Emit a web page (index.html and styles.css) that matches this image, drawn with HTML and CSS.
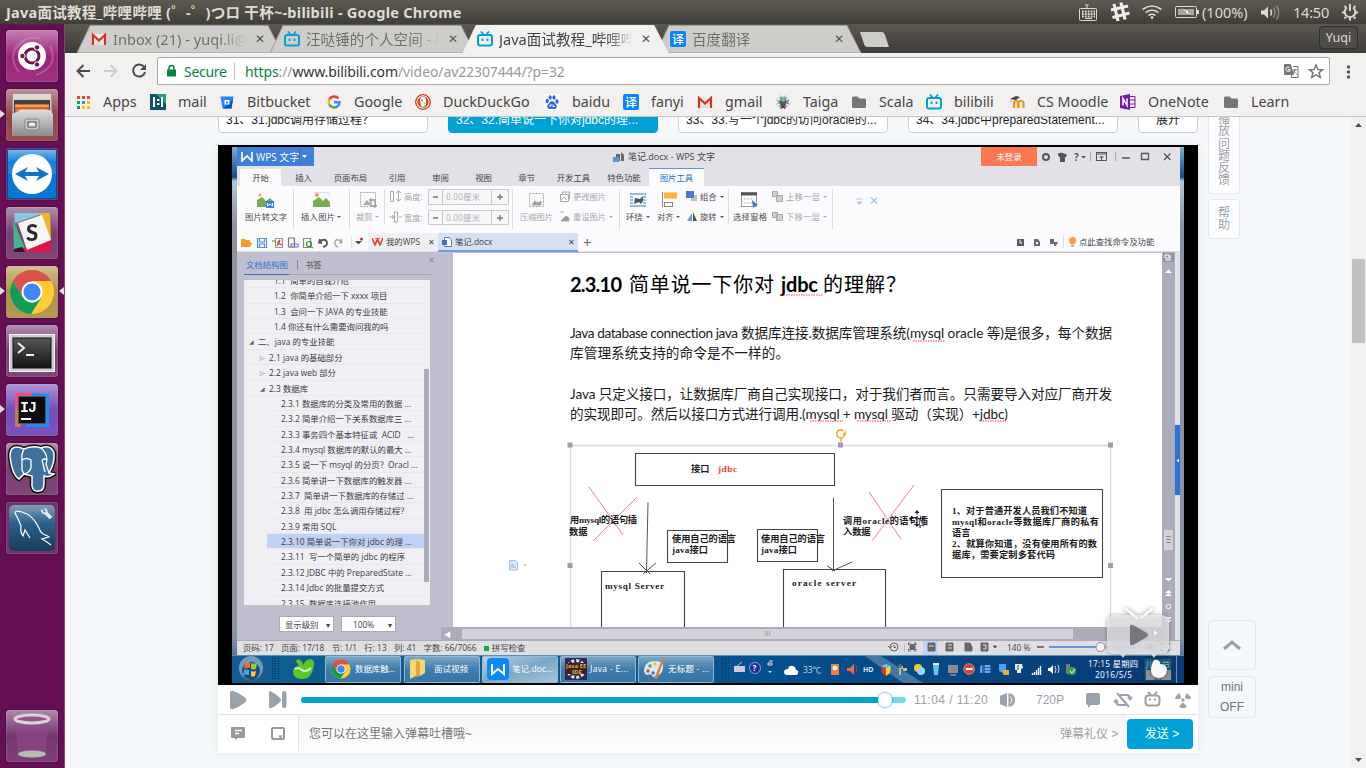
FILE: index.html
```html
<!DOCTYPE html>
<html>
<head>
<meta charset="utf-8">
<title>Java面试教程_哔哩哔哩 (゜-゜)つロ 干杯~-bilibili</title>
<link rel="stylesheet" href="styles.css">
</head>
<body>
<svg width="0" height="0" class="defs">
  <defs>
    <symbol id="tv" viewBox="0 0 16 16"><path d="M4.5 1l2 2.500M11.500 1l-2 2.500" stroke="#00a1d6" stroke-width="1.800" stroke-linecap="round"/><rect x="1" y="4" width="14" height="10.500" rx="2" fill="none" stroke="#00a1d6" stroke-width="2"/><path d="M5.500 7.500v2.500M10.500 7.500v2.500" stroke="#00a1d6" stroke-width="1.800"/></symbol>
    <symbol id="gm" viewBox="0 0 16 16"><path d="M1 3h14v11H1z" fill="#eee"/><path d="M4 14L8 9l4 5z" fill="#dcdcdc"/><path d="M2 14V4l6 5.500L14 4v10" fill="none" stroke="#d93025" stroke-width="2.200"/></symbol>
    <symbol id="fy" viewBox="0 0 16 16"><rect width="16" height="16" rx="2" fill="#0a84ff"/><text x="8" y="12.500" font-size="12" font-weight="500" fill="#fff" text-anchor="middle" font-family="Noto Sans CJK SC">译</text></symbol>
    <symbol id="fold" viewBox="0 0 16 16"><path d="M1 4q0-1.500 1.500-1.500h4l2 2h5q1.500 0 1.500 1.500v6.500q0 1.500-1.500 1.500h-11Q1 14 1 12.500z" fill="#757575"/></symbol>
    <symbol id="chrome" viewBox="0 0 46 46"><circle cx="23" cy="23" r="22" fill="#fc3"/><path d="M23 23L4 12A22 22 0 0 1 42 12H23z" fill="#d9534a"/><path d="M23 12H42A22 22 0 0 0 4 12L13.500 28z" fill="#d9534a"/><path d="M4 12A22 22 0 0 0 22 45L32.500 28.500 23 34 13.500 28z" fill="#119d58"/><circle cx="23" cy="23" r="10.500" fill="#fff"/><circle cx="23" cy="23" r="8.500" fill="#4285f4"/></symbol>
    <linearGradient id="gl" x2="0" y2="1"><stop offset="0" stop-color="#fff" stop-opacity=".45"/><stop offset=".5" stop-color="#fff" stop-opacity=".05"/><stop offset="1" stop-color="#fff" stop-opacity=".1"/></linearGradient>
    <linearGradient id="metal" x2="0" y2="1"><stop offset="0" stop-color="#ddd"/><stop offset="1" stop-color="#8c8c8c"/></linearGradient>
    <linearGradient id="dark" x2="0" y2="1"><stop offset="0" stop-color="#555"/><stop offset="1" stop-color="#151515"/></linearGradient>
    <linearGradient id="sea" x2="0" y2="1"><stop offset="0" stop-color="#7fa0b8"/><stop offset=".4" stop-color="#2c608a"/><stop offset="1" stop-color="#163c59"/></linearGradient>
    <linearGradient id="btn" x2="0" y2="1"><stop offset="0" stop-color="#7da8c8"/><stop offset=".5" stop-color="#3f7caa"/><stop offset="1" stop-color="#3577a6"/></linearGradient>
    <linearGradient id="btnon" x2="1" y2="1"><stop offset="0" stop-color="#bcd3e3"/><stop offset=".5" stop-color="#7aa6c6"/><stop offset="1" stop-color="#a9c6da"/></linearGradient>
    <linearGradient id="task" x2="1" y2="0"><stop offset="0" stop-color="#0e5c92"/><stop offset=".45" stop-color="#0f5a90"/><stop offset=".56" stop-color="#04508f"/><stop offset="1" stop-color="#0a3a73"/></linearGradient>
  </defs>
</svg>

<header class="menubar">
  <span class="menu-title">Java面试教程_哔哩哔哩 (゜-゜)つロ 干杯~-bilibili - Google Chrome</span>
  <div class="indicators">
    <svg width="200" height="24" viewBox="1076 0 200 24" fill="none" stroke="#dfdbd2"><path d="M1087 8V5h-2M1088 5.500V4"/><rect x="1079.500" y="8.500" width="17" height="12" rx="1"/><path d="M1082 11.500h13M1082 14h13M1082 16.500h13" stroke-dasharray="1.700 1.200" stroke-width="1.800"/><path d="M1085 18.500h7"/><g stroke-width="3.200" stroke="#eee"><path d="M1114 4l4 17M1121 2.500l4 17M1111 10l17-4M1112.500 17.500l17-4.500"/></g><g stroke-width="1.700"><path d="M1142.500 9.500q9.500-7 19 0M1145.500 12.500q6.500-4.500 13 0M1148.500 15.500q3.500-2.500 7 0"/></g><circle cx="1152" cy="17.500" r="1" fill="#dfdbd2"/><rect x="1175.500" y="6.500" width="21" height="11" rx="1"/><rect x="1178" y="9" width="16" height="6" fill="#aaa69e" stroke="none"/><path d="M1198 10v4" stroke-width="2"/><path d="M1180 8l9 3 -1 1 6 4 -9-3 1-1z" fill="#fff" stroke="#555" stroke-width=".4"/></svg>
    <span class="ind-pct">(100%)</span>
    <svg width="24" height="24" viewBox="1258 0 24 24" fill="none" stroke="#dfdbd2" stroke-width="1.500"><path d="M1261 10.500h3l4-4v12l-4-4h-3z" fill="#dfdbd2" stroke="none"/><path d="M1270.500 9.500q2 3 0 6"/><path d="M1273.500 7.500q3 5 0 10M1276.500 5.500q4.500 7 0 14" stroke="#8d8a82"/></svg>
    <span class="ind-time">14:50</span>
    <svg width="22" height="24" viewBox="1339 0 22 24" fill="none" stroke="#dfdbd2"><path d="M1347 7.500a5.300 5.300 0 1 0 6 0M1350 4v7" stroke-width="1.900"/><path d="M1344.500 6l1.500 1.500M1355.500 6l-1.500 1.500M1342 12.500h2.500M1358 12.500h-2.500M1344.500 18.500l1.500-1.500M1355.500 18.500l-1.500-1.500M1350 18v2.500" stroke-width="2"/></svg>
  </div>
</header>

<div class="desktop">
<nav class="launcher">
  <svg class="app" viewBox="0 0 52 52"><rect class="tile" width="52" height="52" rx="4" fill="#951a72"/><rect width="52" height="52" rx="4" fill="url(#gl)"/><path d="M7 28Q8 6 34 8M13 42Q-2 22 20 10M44 16Q54 36 30 45" fill="none" stroke="#d9a0c7" stroke-opacity=".35" stroke-width="2"/><circle cx="26" cy="26" r="14" fill="#fff"/><circle cx="26" cy="26" r="7" fill="none" stroke="#6d1450" stroke-width="3"/><g fill="#6d1450" stroke="#fff"><circle cx="16.500" cy="26" r="2.700"/><circle cx="31" cy="17.500" r="2.700"/><circle cx="31" cy="34.500" r="2.700"/></g></svg>
  <div class="slot running"><svg class="app" viewBox="0 0 52 52"><rect class="tile" width="52" height="52" rx="4" fill="#8d393f"/><rect width="52" height="52" rx="4" fill="url(#gl)"/><path d="M7 5h38l2 42H6z" fill="url(#metal)"/><rect x="8" y="11" width="36" height="14" fill="#45403c"/><path d="M9 15h34v10H9z" fill="#c76a34"/><path d="M9 16h34v2H9zM16 20h25v2H9z" fill="#f0a062"/><path d="M6 25l9-4h29l3 4v22H6z" fill="url(#metal)"/><rect x="19" y="30" width="14" height="11" rx="2" fill="#c8c8c8" stroke="#888"/><rect x="22" y="33" width="8" height="5" fill="#eee" stroke="#444"/></svg></div>
  <svg class="app" viewBox="0 0 52 52"><rect class="tile" width="52" height="52" rx="4" fill="#2d3a87"/><rect x="2" y="2" width="48" height="48" rx="2" fill="#0878d6"/><rect x="2" y="2" width="48" height="24" fill="url(#gl)"/><circle cx="26" cy="26" r="20" fill="#fff"/><path d="M9 26l13-7-3 5h14l-3-5 13 7-13 7 3-5H19l3 5z" fill="#0a74ce"/></svg>
  <svg class="app" viewBox="0 0 52 52"><rect class="tile" width="52" height="52" rx="4" fill="#71346a"/><rect width="52" height="52" rx="4" fill="url(#gl)"/><path d="M8 6h30L9 16z" fill="#84cddc"/><path d="M34 6h10l1 28-11-24z" fill="#edb62a"/><path d="M7 13l12 28-11 3z" fill="#42b68a"/><path d="M14 42l31-10v13H18z" fill="#dc1749"/><path d="M8 42l8-2 3 5H8z" fill="#301330"/><path d="M12 16l24-8 9 25-24 10z" fill="#f6f6f6"/><text x="26" y="34" font-family="Lato" font-size="22" font-weight="900" text-anchor="middle" fill="#292733">S</text></svg>
  <div class="slot running focus"><svg class="app" viewBox="0 0 52 52"><rect class="tile" width="52" height="52" rx="4" fill="#ab8d3d"/><rect width="52" height="52" rx="4" fill="url(#gl)"/><use href="#chrome" x="3" y="3" width="46" height="46"/></svg></div>
  <svg class="app" viewBox="0 0 52 52"><rect class="tile" width="52" height="52" rx="4" fill="#71346a"/><rect width="52" height="52" rx="4" fill="url(#gl)"/><rect x="3.500" y="9.500" width="45" height="37" fill="#ccc" stroke="#f4f4f4"/><rect x="7" y="13" width="38" height="30" fill="url(#dark)" stroke="#111"/><path d="M12 18l6 5-6 5M20 30h8" fill="none" stroke="#eee" stroke-width="2"/></svg>
  <div class="slot running"><svg class="app" viewBox="0 0 52 52"><rect class="tile" width="52" height="52" rx="4" fill="#6b42b4"/><rect width="52" height="52" rx="4" fill="url(#gl)"/><path d="M9 9h17L14 43H9z" fill="#ef4c80"/><path d="M9 22l8 12-3 9H9z" fill="#c77b55"/><path d="M26 9l17 1v33H20z" fill="#218cf4"/><rect x="12.500" y="12.500" width="27" height="27" fill="#0c0c0c" stroke="#555"/><text x="14" y="28" font-size="15" font-weight="bold" fill="#fff" font-family="Liberation Mono" textLength="17">IJ</text><path d="M15 35h10" stroke="#fff" stroke-width="2"/></svg></div>
  <svg class="app" viewBox="0 0 52 52"><rect class="tile" width="52" height="52" rx="4" fill="#71346a"/><rect width="52" height="52" rx="4" fill="url(#gl)"/><path d="M18 6Q4 0 4 13Q6 32 13 36L18 31 26 33V43Q27 49 33 48Q38 48 38 40V33Q43 35 48 31L43 30Q49 20 48 10Q45 1 35 5Q27 2 18 6z" fill="#111" stroke="#111" stroke-width="4.500" stroke-linejoin="round"/><path d="M18 6Q4 0 4 13Q6 32 13 36L18 31 26 33V43Q27 49 33 48Q38 48 38 40V33Q43 35 48 31L43 30Q49 20 48 10Q45 1 35 5Q27 2 18 6z" fill="#3f719b" stroke="#fff" stroke-width="1.500"/><path d="M18 6q-3 6-2 11v10l2 4M35 5q6 5 6 12l-1 4 3 9M16 17q4-3 9 0v8q-2 5-7 6M36 17q3-2 5 0M36 17l3 12" fill="none" stroke="#fff" stroke-width="1.300"/></svg>
  <svg class="app" viewBox="0 0 52 52"><rect class="tile" width="52" height="52" rx="4" fill="#71346a"/><rect x="3" y="3" width="46" height="46" rx="5" fill="url(#sea)"/><path d="M24 36l-5-8-2 6Q14 30 15 24Q13 18 9 11Q9 8 16 10Q27 13 33 26Q34 30 37 32Q42 34 43 35L36 37Q40 39 45 43" fill="none" stroke="#fff" stroke-width="1.200"/><path d="M40 11l5 5" stroke="#e6edf2" stroke-width="3.500"/><path d="M35.500 7.500q1 5 4.500 3.500 2-2-1.500-4.500" stroke="#e6edf2" stroke-width="1.800" fill="none"/></svg>
  <svg class="app trash" viewBox="0 0 52 52"><rect class="tile" width="52" height="52" rx="4" fill="#6f2a66"/><rect width="52" height="52" rx="4" fill="url(#gl)"/><path d="M9 10h34l-4 36H12z" fill="#8f4d8a" fill-opacity=".6"/><ellipse cx="26" cy="44" rx="14" ry="3.500" fill="#b5bdb2"/><ellipse cx="26" cy="9" rx="17" ry="4" fill="#925386" stroke="#d6d6d2" stroke-width="3"/></svg>
</nav>

<main class="browser">
  <div class="tabstrip">
    <div class="tab"><svg class="tab-bg" viewBox="0 0 210 29"><path d="M0 29L13 1.500H191L205 29z"/></svg><svg class="fav"><use href="#gm"/></svg><span>Inbox (21) - yuqi.li@</span><i>✕</i></div>
    <div class="tab"><svg class="tab-bg" viewBox="0 0 210 29"><path d="M0 29L13 1.500H191L205 29z"/></svg><svg class="fav"><use href="#tv"/></svg><span>汪哒锤的个人空间 - 哔</span><i>✕</i></div>
    <div class="tab active"><svg class="tab-bg" viewBox="0 0 210 29"><path d="M0 29L13 1.500H191L205 29z"/></svg><svg class="fav"><use href="#tv"/></svg><span>Java面试教程_哔哩哔</span><i>✕</i></div>
    <div class="tab"><svg class="tab-bg" viewBox="0 0 210 29"><path d="M0 29L13 1.500H191L205 29z"/></svg><svg class="fav"><use href="#fy"/></svg><span>百度翻译</span><i>✕</i></div>
    <svg class="newtab" width="34" height="29" viewBox="0 0 34 29"><path d="M1 8h22q2 0 3 3l4 12H8q-2 0-3-3z" fill="#cfcdca"/></svg>
    <div class="user">Yuqi</div>
  </div>
  <div class="toolbar">
    <svg width="92" height="33" viewBox="65 53 92 33" fill="none" stroke="#4d4d4d" stroke-width="2"><path d="M90 71H78M83.500 65l-6 6 6 6"/><path d="M104 71h12M110.500 65l6 6-6 6" stroke="#ccc"/><path d="M144 67a6 6 0 1 0 1 5"/><path d="M146 64v6h-6z" fill="#4d4d4d" stroke="none"/></svg>
    <div class="omnibox">
      <svg width="12" height="14" viewBox="0 0 12 14"><path d="M3 6V4q0-2.500 2.500-2.500T8 4v2" fill="none" stroke="#0b8043" stroke-width="1.500"/><rect x="1" y="5.500" width="9" height="7" fill="#0b8043"/></svg>
      <span class="secure">Secure</span><span class="url"><b>https</b>://<em>www.bilibili.com</em>/video/av22307444/?p=32</span>
      <svg class="omni-icons" width="50" height="20" viewBox="1280 61 50 20" fill="none" stroke="#777"><path d="M1284.500 64.500h6l3 10h-9z" fill="#777"/><path d="M1293 66.500h5v11h-7l1-3M1293 70h4M1295 69q0 4-2.500 5M1293 70.500l4 4"/><path d="M1289.500 67.500q-3-1.500-3.500 2 1 3.500 4 1.500v-1.500h-2" stroke="#fff"/><path d="M1316 65l2 4.500 4.500.3-3.500 3 1.300 4.500-4.300-2.500-4.300 2.500 1.300-4.500-3.500-3 4.500-.3z" stroke-width="1.500"/></svg>
    </div>
    <svg width="36" height="33" viewBox="1330 53 36 33" fill="#555"><circle cx="1348.500" cy="67" r="1.700"/><circle cx="1348.500" cy="72" r="1.700"/><circle cx="1348.500" cy="77" r="1.700"/></svg>
  </div>
  <div class="bookmarks">
    <div><svg viewBox="0 0 16 16"><path d="M2 3.500h13" stroke="#ea4335" stroke-width="3" stroke-dasharray="3 2"/><path d="M2 8.500h3" stroke="#0f9d58" stroke-width="3"/><path d="M7 8.500h3" stroke="#4285f4" stroke-width="3"/><path d="M12 8.500h3" stroke="#fbbc05" stroke-width="3"/><path d="M2 13.500h3" stroke="#0f9d58" stroke-width="3"/><path d="M7 13.500h8" stroke="#fbbc05" stroke-width="3" stroke-dasharray="3 2"/></svg>Apps</div>
    <div><svg viewBox="0 0 16 16"><rect width="16" height="16" fill="#124f6b"/><path d="M6 0h10v10z" fill="#1fa37a"/><path d="M4 3v10M12 3v10M7 6h2.500M7 10h2.500" stroke="#fff" stroke-width="2"/></svg>mail</div>
    <div><svg viewBox="0 0 16 16"><path d="M1.500 2.500h13l-2 12h-9z" fill="#2684ff"/><path d="M9 10l5-5-1.500 9.500H4z" fill="#0052cc"/><rect x="5.500" y="6" width="5" height="4.500" fill="#fff"/><rect x="7" y="7.500" width="2" height="2" fill="#2684ff"/></svg>Bitbucket</div>
    <div><svg viewBox="0 0 16 16" fill="none" stroke-width="2.400"><path d="M12.500 4.500A5.500 5.500 0 0 0 3.300 5.500" stroke="#ea4335"/><path d="M3.300 5.500a5.500 5.500 0 0 0 0 5" stroke="#fbbc05"/><path d="M3.300 10.500a5.500 5.500 0 0 0 8.500 1.700" stroke="#34a853"/><path d="M11.800 12.200A5 5 0 0 0 13.500 8.300H8" stroke="#4285f4"/></svg>Google</div>
    <div><svg viewBox="0 0 16 16"><circle cx="8" cy="8" r="7.300" fill="#fff" stroke="#d8391e" stroke-width="1.300"/><circle cx="8" cy="8" r="5.700" fill="#de4323"/><path d="M6 12.500L5 6q0-3 3-3t3 3v7z" fill="#fff"/><path d="M8 8l4 .500-3 2z" fill="#fc3"/><circle cx="7" cy="6" r=".8" fill="#234"/><path d="M8 12l3-1v3z" fill="#5b3"/></svg>DuckDuckGo</div>
    <div><svg viewBox="0 0 16 16"><rect width="16" height="16" fill="#fff"/><g fill="#2f6ade"><ellipse cx="3.200" cy="7" rx="1.700" ry="2.200"/><ellipse cx="6.200" cy="3.500" rx="1.600" ry="2.200"/><ellipse cx="10" cy="3.500" rx="1.600" ry="2.200"/><ellipse cx="13" cy="7.500" rx="1.600" ry="2.200"/><path d="M8 7q2 0 3.500 3Q14 12 12 14.500q-2 1-4 .200-2 .800-4-.200Q2 12 4.500 10 6 7 8 7z"/></g><path d="M5 12h2v-2M9 10.500v2h2" stroke="#fff" fill="none"/></svg>baidu</div>
    <div><svg><use href="#fy"/></svg>fanyi</div>
    <div><svg><use href="#gm"/></svg>gmail</div>
    <div><svg viewBox="0 0 16 16"><path d="M8 8L5 1l3 2 3-2z" fill="#6fc796"/><path d="M8 8L5 15l3-1 3 1z" fill="#4b3a53"/><path d="M8 8L1 5l2 3-2 3z" fill="#8bb59b"/><path d="M8 8l7-3-2 3 2 3z" fill="#9a7aa8"/><path d="M3 3l4 1 2 4zM13 3l-4 1-1 4z" fill="#58987a"/><path d="M3 13l4-1 1-4zM13 13l-4-1-1-4z" fill="#746180"/><circle cx="8" cy="8" r="3.500" fill="#5d5564"/><path d="M5 6l3-2 3 2-3 2z" fill="#6fc796"/></svg>Taiga</div>
    <div><svg><use href="#fold"/></svg>Scala</div>
    <div><svg><use href="#tv"/></svg>bilibili</div>
    <div><svg viewBox="0 0 16 16"><path d="M5 14V9q0-2 2-2t2 2v5M9.500 14V9q0-2 2.500-2t2.500 2v5" fill="none" stroke="#f7931e" stroke-width="2.200"/><path d="M1 5l6-3 4 1-4 3z" fill="#444"/><path d="M2 5v4" stroke="#bbb"/></svg>CS Moodle</div>
    <div><svg viewBox="0 0 16 16"><path d="M0 2L10 0v16L0 14z" fill="#7719aa"/><path d="M10 2.500h5v11h-5M10 6h5M10 10h5" fill="none" stroke="#7719aa"/><path d="M3 11.500v-7l4 7v-7" fill="none" stroke="#fff" stroke-width="1.500"/></svg>OneNote</div>
    <div><svg><use href="#fold"/></svg>Learn</div>
  </div>

  <div class="viewport">
    <section class="page">
      <ul class="parts">
        <li>31、31.jdbc调用存储过程？</li>
        <li class="on">32、32.简单说一下你对jdbc的理...</li>
        <li>33、33.写一个jdbc的访问oracle的...</li>
        <li>34、34.jdbc中preparedStatement...</li>
        <li class="more">展开</li>
      </ul>

      <div class="player">
        <div class="video">
          <div class="frame">
            <div class="wps">
              <div class="wps-title">
                <div class="wps-brand"><svg width="12" height="10" viewBox="0 0 12 10"><path d="M1 0v9l5-5 5 5V0" fill="none" stroke="#fff" stroke-width="1.700"/></svg><span>WPS 文字</span><svg width="20" height="19" viewBox="0 0 20 19"><path d="M.5 0v19" stroke="#2f6fc4"/><path d="M3 8h5l-2.500 3z" fill="#fff"/></svg></div>
                <div class="wps-doc"><svg width="12" height="10" viewBox="0 0 12 10"><path d="M3 2h4v7H3zM8 0l3 3v6H8z" fill="#666"/><rect y="5" width="6" height="5" fill="#5d93d8"/></svg>笔记.docx - WPS 文字</div>
                <div class="wps-login">未登录</div>
                <svg class="wps-win" width="143" height="19" viewBox="1037 147 143 19" fill="none" stroke="#555"><circle cx="1046" cy="157" r="3" stroke-width="2"/><path d="M1058 153.500l3-1 3 1 3 1-1 2.500h-1v5h-5v-5h-1l-1-2.500z" fill="#555" stroke="none"/><text x="1074" y="160.500" font-size="10" font-weight="bold" fill="#555" stroke="none" font-family="Open Sans">?</text><path d="M1081 156l2.500 2.500 2.500-2.500z" fill="#555" stroke="none"/><path d="M1090.500 152v9M1115.500 152v9" stroke="#aaa"/><rect x="1096.500" y="152.500" width="10" height="8"/><path d="M1096 154h11M1101.500 160v-4M1099.500 158l2-2 2 2"/><path d="M1122 158h8M1141.500 153.500h7v6h-7zM1164 153.500l6.500 6.500M1170.500 153.500l-6.500 6.500" stroke-width="1.300"/></svg>
              </div>
              <div class="wps-menu"><span class="sel">开始</span><span>插入</span><span>页面布局</span><span>引用</span><span>审阅</span><span>视图</span><span>章节</span><span>开发工具</span><span>特色功能</span><span class="pic">图片工具</span></div>
              <svg class="ribbon" width="943" height="47" viewBox="237 186 943 47">
                <path d="M530.500 189v1M293.500 189v41M349.500 189v41M384.500 189v35M512.500 189v41M619.500 189v41M728.500 189v35M832.500 189v41" stroke="#dcdce2"/>
                <g fill="#78ad58"><path d="M257 207v-7l5-3 4 4 4-3 4 4v5zM313 207v-6l6-4 4 4 3-3 4 4v5z"/></g><circle cx="260" cy="195" r="1.500" fill="#f2a463"/><circle cx="317" cy="195" r="2" fill="#f29a4d"/><path d="M313.500 192.500h16v4" fill="none" stroke="#cfe3f2"/><rect x="266" y="201" width="8" height="7" fill="#3d7fd9"/><path d="M267.500 203v3l2.500-2 2.500 2v-3" stroke="#fff" fill="none"/>
                <rect x="360.500" y="192.500" width="15" height="14" fill="none" stroke="#aaa" stroke-dasharray="2 1"/><path d="M363 205l4-5 3 3v2z" fill="#aaa"/><path d="M371 198v8h6M369 200h6v8" fill="none" stroke="#999" stroke-width="1.300"/>
                <g fill="#4b4b4b" font-size="8.300"><text x="245" y="220" textLength="42">图片转文字</text><text x="301" y="220" textLength="34">插入图片</text><text x="626" y="220">环绕</text><text x="657" y="220">对齐</text><text x="700" y="200">组合</text><text x="700" y="220">旋转</text><text x="733" y="220" textLength="34">选择窗格</text></g>
                <g fill="#a8a8ae" font-size="8.300"><text x="356" y="220">裁剪</text><text x="404" y="200">高度:</text><text x="404" y="221">宽度:</text><text x="520" y="220" textLength="33">压缩图片</text><text x="573" y="200" textLength="33">更改图片</text><text x="573" y="220" textLength="33">重设图片</text><text x="786" y="200" textLength="34">上移一层</text><text x="786" y="220" textLength="34">下移一层</text></g>
                <g fill="#555"><path d="M337 216h4l-2 2zM646 216h4l-2 2zM676 216h4l-2 2zM720 196h4l-2 2zM720 216h4l-2 2z"/><path d="M375 216h4l-2 2zM609 216h4l-2 2zM823 196h4l-2 2zM823 216h4l-2 2z" fill="#aaa"/></g>
                <g fill="#f7f7f9" stroke="#c8c8ce"><path d="M428.500 189.500h80v15h-80zM442.500 190v15M491.500 190v15M428.500 210.500h80v14h-80zM442.500 210v15M491.500 210v15"/></g><path d="M433 197h5M433 218h5M497 197h6M500 194v6M497 218h6M500 215v6" stroke="#777" stroke-width="1.300"/><g fill="#b0b0b5" font-size="8.300"><text x="446" y="200" textLength="34">0.00厘米</text><text x="446" y="221" textLength="34">0.00厘米</text></g>
                <g fill="none" stroke="#aaa"><path d="M390.500 191.500h3v10h-3zM398.500 191v10M396 193l2.500-2 2.500 2M396 199l2.500 2 2.500-2M394.500 212v10h3v-10zM389 217h4M399 217h3M392 215l2 2-2 2"/><rect x="529.500" y="193.500" width="14" height="13" stroke-dasharray="2 1"/><path d="M532 205l3-4 3 2 3-2v4z" fill="#999"/><path d="M560.500 194.500h8v7h-8zM562.500 194v-2h7v7h-1M561 200l3-3 3 3"/><path d="M560 212h4M562 220l4-4 3 2v3h-8z" fill="#999"/></g>
                <path d="M630 194h16M630 197h3M643 197h3M630 200h3M643 200h3M630 203h3M643 203h3M630 206h16" stroke="#78a5df" stroke-width="1.500"/><path d="M634 204l1-6 5 1 3-3v5l-2 3-2-2z" fill="#4b5563"/><path d="M662.500 192v15" stroke="#888"/><rect x="664" y="192.500" width="13" height="6" fill="#fcb23d"/><rect x="664.500" y="202.500" width="8" height="4" fill="#fff" stroke="#888"/><rect x="691" y="195" width="6" height="6" fill="#bac0ca"/><rect x="686" y="191" width="8" height="7" fill="#5178c8"/><path d="M687 221l5-8v8z" fill="#6d9ee0"/><path d="M693 221v-9l4 9z" fill="#555"/>
                <rect x="741.500" y="192.500" width="15" height="14" fill="#fff" stroke="#999"/><path d="M741 194h16" stroke="#555" stroke-width="3"/><path d="M744 199h10M744 203h8" stroke="#bbb" stroke-dasharray="2 1"/><path d="M752 200l6 5-3 1-2 2z" fill="#4778d6"/><path d="M772.500 191.500h5v5h-5zM776.500 195.500h6v6h-6zM772.500 212.500h5v5h-5zM776.500 214.500h6v6h-6z" fill="#d0d0d3" stroke="#aaa"/><path d="M856 199h7M857 202h5l-2.500 2.500z" stroke="#a8cbe8" fill="#a8cbe8"/><path d="M871 197.500l6 6M877 197.500l-6 6" stroke="#a8cbe8" stroke-width="1.500"/>
              </svg>
              <div class="doctabs">
                <svg width="131" height="19" viewBox="237 233 131 19" fill="none" stroke-width="1.200"><path d="M241 247v-8h4l1 1h4v2l2 1-2 4z" fill="#f49b2d"/><path d="M257.500 238.500h9v9h-9zM259.500 239v3h5v-3M259.500 247v-3h5v3" stroke="#5b8fdc"/><path d="M275.500 238.500h7v9h-7z" stroke="#999"/><path d="M277 246q5-9 1-4-1 1 4 3" stroke="#d33"/><path d="M272 241h4" stroke="#3a3"/><path d="M288.500 247v-9h6v9z" stroke="#777"/><path d="M291 244h7v3h-7z" stroke="#7373c5"/><path d="M303.500 238.500h7v9h-7z" stroke="#888"/><circle cx="309" cy="244" r="2.500" stroke="#3b963b"/><path d="M310 246l3 2" stroke="#3b963b"/><path d="M320 239l-1 3.500 3 .500M319 242q7-5 8 1 0 3-4 4" stroke="#555" stroke-width="1.800"/><path d="M341 239l1 3.500-3 .500M342 242q-7-5-7 1 0 3 3 4" stroke="#aaa" stroke-width="1.500"/><path d="M351.500 237v11" stroke="#ddd"/><path d="M355 241h7l-3.500 3.500z" fill="#555"/><circle cx="361.500" cy="239" r="1.500" fill="#e22"/></svg>
                <div class="dt mine"><svg width="11" height="8" viewBox="0 0 11 8"><path d="M0 0l3 7 2.500-6L8 7l3-7M3 0l5 0" fill="none" stroke="#e8403a" stroke-width="1.600"/></svg><span>我的WPS</span><i>✕</i></div>
                <div class="dt cur"><svg width="10" height="10" viewBox="0 0 10 10"><path d="M2.500.500h5l2 2v7h-7z" fill="#fff" stroke="#6078b8"/><path d="M0 3h5v5H0z" fill="#4b6fc4"/></svg><span>笔记.docx</span><i>✕</i></div>
                <b class="plus">+</b>
                <div class="find"><svg width="62" height="19" viewBox="1015 233 62 19"><rect x="1017" y="239" width="7" height="7" fill="#555b6b"/><path d="M1020 240v3h2" stroke="#fff" fill="none"/><path d="M1034 239h4l2 3v4h-6zM1050 239h4v3h4l-2 4h-2v-2h-4z" fill="#666c7b"/><path d="M1036 242h2v2h-2z" fill="#fff"/><path d="M1063.500 236v12" stroke="#ddd"/><path d="M1072.500 237q3.500 0 3.500 3.500 0 2-2 4h-3q-2-2-2-4 0-3.500 3.500-3.500z" fill="#f6a044"/><path d="M1071 246h3" stroke="#777"/></svg>点此查找命令及功能</div>
              </div>
              <div class="work">
                <aside class="outline">
                  <div class="ot"><span class="on">文档结构图</span><span>书签</span><i>✕</i></div>
                  <ol>
                    <li class="l2">1.1&nbsp; 简单的自我介绍</li><li class="l2">1.2&nbsp; 你简单介绍一下 xxxx 项目</li><li class="l2">1.3&nbsp; 会问一下 JAVA 的专业技能</li><li class="l2">1.4 你还有什么需要询问我的吗</li>
                    <li class="l1"><s>◢</s>二、java 的专业技能</li><li class="l15"><s>▷</s>2.1 java 的基础部分</li><li class="l15"><s>▷</s>2.2 java web 部分</li><li class="l15"><s>◢</s>2.3 数据库</li>
                    <li class="l3">2.3.1 数据库的分类及常用的数据 ...</li><li class="l3">2.3.2 简单介绍一下关系数据库三 ...</li><li class="l3">2.3.3 事务四个基本特征或&nbsp; ACID &nbsp; ...</li><li class="l3">2.3.4 mysql 数据库的默认的最大 ...</li><li class="l3">2.3.5 说一下 msyql 的分页？Oracl ...</li><li class="l3">2.3.6 简单讲一下数据库的触发器 ...</li><li class="l3">2.3.7&nbsp; 简单讲一下数据库的存储过 ...</li><li class="l3">2.3.8&nbsp; 用 jdbc 怎么调用存储过程？</li><li class="l3">2.3.9 常用 SQL</li><li class="l3 hit">2.3.10 简单说一下你对 jdbc 的理 ...</li><li class="l3">2.3.11&nbsp; 写一个简单的 jdbc 的程序</li><li class="l3">2.3.12 JDBC 中的 PreparedState ...</li><li class="l3">2.3.14 Jdbc 的批量提交方式</li><li class="l3">2.3.15&nbsp; 数据库连接池作用</li>
                  </ol>
                  <div class="osel"><span>显示级别<u>▾</u></span><span>100%<u>▾</u></span></div>
                </aside>
                <div class="sheet">
                  <svg class="paper" width="709" height="374" viewBox="453 253 709 374">
                    <g class="h"><text x="570" y="292" textLength="52" font-weight="bold">2.3.10</text><text x="629" y="292" textLength="145">简单说一下你对</text><text x="781" y="292" textLength="37" font-weight="bold">jdbc</text><text x="823" y="292" textLength="83">的理解？</text></g>
                    <g class="p"><text x="570" y="338" textLength="168">Java database connection java</text><text x="741" y="338" textLength="371">数据库连接.数据库管理系统(mysql oracle 等)是很多，每个数据</text><text x="570" y="358" textLength="219">库管理系统支持的命令是不一样的。</text><text x="570" y="399" textLength="542">Java 只定义接口，让数据库厂商自己实现接口，对于我们者而言。只需要导入对应厂商开发</text><text x="570" y="419" textLength="438">的实现即可。然后以接口方式进行调用.(mysql + mysql 驱动（实现）+jdbc)</text></g>
                    <path d="M781 295h42M913 341h32M810 421h33M857 421h34M980 421h26" stroke="#e54646" stroke-dasharray="1.500 1"/>
                    <path d="M570.500 627V445.500h540V627" fill="none" stroke="#dcdce4" stroke-width="1.400"/><g fill="#9c9cac"><path d="M567.500 442.500h5v5h-5zM838 442.500h5v5h-5zM1108 442.500h5v5h-5zM567.500 563h5v5h-5zM1108 563h5v5h-5z"/></g><path d="M843.500 431a4 4 0 1 0 1 4M841 438v4" fill="none" stroke="#f6ad3c" stroke-width="1.600"/><path d="M846 430v5h-4z" fill="#f6ad3c"/>
                    <g fill="none" stroke="#444" stroke-width="1.100"><path d="M635.500 453.500h199v32h-199zM667.500 530.500h60v32h-60zM757.500 529.500h60v32h-60zM941.500 489.500h161v88h-161zM601.500 627v-55.500h83V627M783.500 627v-57.500h102V627"/><path d="M648 502.500L646.500 573M639 563l11 11M656 563l-13 11M833.500 497.500V571M827 566l8 5M852 562l-20 9" stroke-width=".9"/></g>
                    <path d="M589 487l34 48M637 497l-44 44M869 492l32 47M914 485l-42 56" stroke="#f08080"/>
                    <g class="d"><text x="691" y="472">接口</text><text x="718" y="472" textLength="19" fill="#e33">jdbc</text><text x="570" y="523" textLength="67">用mysql的语句插</text><text x="569" y="535">数据</text><text x="672" y="542" textLength="64">使用自己的语言</text><text x="672" y="553" textLength="36">java接口</text><text x="761" y="542" textLength="64">使用自己的语言</text><text x="761" y="553" textLength="36">java接口</text><text x="843" y="524" textLength="85">调用oracle的语句插</text><text x="843" y="535">入数据</text><text x="605" y="589" textLength="59">mysql Server</text><text x="792" y="586" textLength="64">oracle server</text><text x="952" y="514" textLength="135">1、对于普通开发人员我们不知道</text><text x="952" y="525" textLength="147">mysql和oracle等数据库厂商的私有</text><text x="952" y="536">语言</text><text x="952" y="547" textLength="145">2、就算你知道，没有使用所有的数</text><text x="952" y="558" textLength="103">据库，需要定制多套代码</text></g>
                    <path d="M917 510l2.500 3h-5zM917 527l2.500-3h-5zM909 518.500l3-2.500v5zM925 518.500l-3-2.500v5z"/><path d="M917 513v11M912 518.500h10" stroke="#111" stroke-dasharray="1.500 1.500"/><path d="M919 518l5 8-3-1-1 3z" fill="#fff" stroke="#222" stroke-width=".7"/>
                    <path d="M509.500 560.500h6l2 2v7.500h-8z" fill="#dce7f7" stroke="#a4bfe4"/><path d="M511 565h3M511 567h5" stroke="#8fb0de"/><path d="M523 564.500h4l-2 2z" fill="#b9b9c4"/>
                  </svg>
                  <div class="hbar"><b>◀</b><div>III</div></div>
                </div>
                <svg class="vbar" width="18" height="388" viewBox="1162 252 18 388"><rect x="1162" y="252" width="13" height="388" fill="#acabb9"/><rect x="1175" y="252" width="5" height="388" fill="#e2e1e7"/><rect x="1175" y="425" width="5" height="70" fill="#2a72d4"/><path d="M1179 458.500v4l-2.500-2z" fill="#fff"/><rect x="1164" y="530" width="9" height="20" fill="#d3d2da"/><path d="M1166 536.500h5M1166 539.500h5M1166 542.500h5" stroke="#888"/><path d="M1165 578h7l-3.500 3.500zM1165 273h7l-3.500-3.500zM1165 593l3.500-3 3.500 3zM1165 596l3.500-3 3.500 3zM1165 617l3.500 3 3.500-3zM1165 620l3.500 3 3.500-3z" fill="#fff"/><circle cx="1168.500" cy="606.500" r="2.200" fill="none" stroke="#fff"/><path d="M1163 253h11v9h-11z" fill="#9493a5"/><path d="M1165 255h4v3h-4zM1170 255v6M1165 260h4" stroke="#fff" fill="none"/></svg>
              </div>
              <div class="status"><span>页码: 17</span><span>页面: 17/18</span><span>节: 1/1</span><span>行: 13</span><span>列: 41</span><span>字数: 66/7066</span><span class="spell">拼写检查</span>
                <svg width="122" height="15" viewBox="883 641 122 15" fill="none" stroke="#666"><circle cx="894" cy="647" r="4"/><path d="M894 645v2.500h2M888 646l2 2 2-2"/><path d="M904.500 643v9" stroke="#bbb"/><path d="M908.500 645v-2h2M914 643h2v2M916 649v2h-2M910.500 651h-2v-2"/><rect x="910" y="644.500" width="5" height="5" fill="#666"/><rect x="923" y="640" width="15" height="15" fill="#c0d4f3" stroke="none"/><path d="M928 643h7v8h-7zM946 643h7v8h-7zM965 643h5l2 4v4h-7zM981 643h7v8h-7z" fill="#666"/><path d="M929 646h5M948 645h4M948 648h4M983 645h3v4h-3" stroke="#ddd"/><path d="M993 646h4l-2 2z" fill="#555"/></svg>
                <span class="zoomtxt">140 %</span>
                <svg width="145" height="15" viewBox="1035 641 145 15" fill="none" stroke="#555"><path d="M1037 647h7" stroke-width="1.500"/><path d="M1049 647h52" stroke="#3d7fd9" stroke-width="1.500"/><path d="M1101 647h42" stroke="#aaa"/><circle cx="1100.500" cy="647" r="4.500" fill="#f5f5f7" stroke="#888"/><path d="M1147 647h7M1150.500 643.500v7" stroke="#777"/><path d="M1161 645v-2h2M1167 643h2v2M1169 649v2h-2M1163 651h-2v-2" stroke="#777"/></svg>
              </div>
            </div>
            <svg class="taskbar" width="952" height="28" viewBox="232 655 952 28">
              <rect x="232" y="655" width="952" height="28" fill="url(#task)"/><path d="M232 655.500h952" stroke="#5d8fb1"/><path d="M865 656h16l42 27h-20z" fill="#fff" fill-opacity=".25"/>
              <circle cx="251" cy="669" r="13" fill="#285c87"/><circle cx="251" cy="668" r="12" fill="#6d9cbc"/><circle cx="251" cy="671" r="9" fill="#184c7c"/><path d="M245 663q3-2 5-1v6q-2-1-6 1z" fill="#ee6a35"/><path d="M251 663q3 1 6 0l-1 6q-3 1-5 0z" fill="#94c83d"/><path d="M244 670q3-1 5 0v5q-3-1-6 0z" fill="#4ba2e0"/><path d="M251 671q3 1 5 0l-1 5q-3 1-4 0z" fill="#fbcb31"/>
              <g stroke="#082e4c" stroke-dasharray="1 1.500"><path d="M272.500 658v22M275.500 658v22M278.500 658v22M722.500 658v22M725.500 658v22M728.500 658v22"/></g>
              <path d="M293 671q1-5 6-5l-3-5q1-3 4-1 3 2 3 6 2-7 8-7 5 2 2 10-2 10-11 10-9 0-9-8z" fill="#5fc52b"/><path d="M295 669q4-2 7 1 4 3 9-2" fill="none" stroke="#dff6c5" stroke-width="1.800"/>
              <g stroke="#aac8dc" stroke-width=".8"><rect x="325.500" y="656.500" width="75" height="26" rx="1" fill="url(#btn)"/><rect x="404.500" y="656.500" width="75" height="26" rx="1" fill="url(#btn)"/><rect x="482.500" y="656.500" width="75" height="26" rx="1" fill="url(#btnon)"/><rect x="560.500" y="656.500" width="75" height="26" rx="1" fill="url(#btn)"/><rect x="638.500" y="656.500" width="75" height="26" rx="1" fill="url(#btn)"/></g>
              <use href="#chrome" x="331" y="659" width="20" height="20"/><path d="M410 660l6-1v17l-6 3zM416 659l9 1v13l-5 3-4 0z" fill="#f4d674"/><path d="M416 660v17l4-1v-14z" fill="#d7aa3e"/><rect x="487" y="658" width="22" height="22" rx="4" fill="#0a88fb"/><path d="M492 664v10l6-5 6 5v-10" fill="none" stroke="#fff" stroke-width="2"/>
              <rect x="565" y="658" width="22" height="22" fill="#322852"/><circle cx="576" cy="669" r="8.500" fill="none" stroke="#ddd" stroke-width="3" stroke-dasharray="3 2"/><rect x="566" y="663" width="20" height="11" fill="#3a241d"/><text x="566" y="668" font-size="5.500" fill="#f3ad3d" font-weight="bold" textLength="20">Java EE</text><text x="572" y="674" font-size="6" fill="#f3ad3d" font-weight="bold">IDE</text>
              <path d="M644 670q1-9 11-9 9 0 8 7-1 8-10 9-2-4-6-2-3-1-3-5z" fill="#dbe9f2"/><circle cx="648" cy="671" r="1.700" fill="#d44"/><circle cx="650" cy="666" r="1.700" fill="#58a642"/><circle cx="655" cy="664" r="1.700" fill="#eebd3a"/><circle cx="653" cy="673" r="1.700" fill="#3979cf"/><path d="M654 679l6-15 2-5 2 1-2 5-5 14z" fill="#e07f31"/>
              <g fill="#fff" font-size="8.500"><text x="355" y="672" textLength="40">数据库触...</text><text x="434" y="672" textLength="34">面试视频</text><text x="512" y="672" textLength="41">笔记.doc...</text><text x="590" y="672" textLength="38">Java - E...</text><text x="668" y="672" textLength="41">无标题 - ...</text></g>
              <rect x="734" y="666" width="11" height="6" fill="#ccd" /><path d="M737 666l5-4" stroke="#ccd"/><circle cx="755" cy="668" r="5.500" fill="#1e2a98" stroke="#8d9fdd"/><text x="752.500" y="671" font-size="8" font-weight="bold" fill="#fff">?</text><path d="M768 663h4v2h-4zM769 661h4" stroke="#ddd" fill="none"/><path d="M768 671h4l-2 2z" fill="#ddd"/><path d="M787 675q-3 0-3-3t4-3q1-4 5-3 3 1 3 4 3 0 2 3 0 2-2 2z" fill="#fff"/><text x="803" y="673" font-size="8.500" fill="#c9d6e6">33℃</text>
              <rect x="831" y="664" width="8" height="11" fill="#eb7f34"/><circle cx="835" cy="668" r="2.500" fill="#eee"/><path d="M847 668h3l4-4v11l-4-4h-3z" fill="#ee6b47"/><path d="M856 665q2 4 0 8" stroke="#c33" fill="none"/><text x="863" y="672" font-size="7" font-weight="bold" fill="#d6efff">HD</text><path d="M881 666l5 2v8l-4-3z" fill="#e3332b"/><path d="M886 668l5-2-1 7-4 3z" fill="#ffd52d"/><path d="M881 666l5-2 5 2-5 2z" fill="#58c8e8"/><path d="M899 666h4v3h-2v6h-2zM903 668h4v3h-4z" fill="#bcc08f"/><circle cx="900" cy="666" r="2" fill="#666"/><circle cx="918" cy="668" r="4" fill="#ffc520"/><circle cx="921" cy="671" r="4" fill="#9bd6ff"/><path d="M933 665h6l-1 10h-4z" fill="#68c4ed"/><path d="M933 664h6" stroke="#eee" stroke-width="2"/><path d="M948 665h10v8h-10z" fill="#8c8c96"/><path d="M950 675h6" stroke="#bbb"/><circle cx="969" cy="669" r="5.300" fill="#dd382f" stroke="#ffbdb0" stroke-width=".6"/><path d="M966 669h6.500" stroke="#fff" stroke-width="2.200"/><path d="M981 665h10v8h-10z" fill="#1e69c4"/><path d="M985 666h5M985 669h5M985 672h5M981 666v7" stroke="#d5e9ff"/><path d="M999 664h7v7l-3 2-4-2z" fill="#4b9ff0"/><rect x="1003" y="670" width="6" height="5" fill="#f2a736"/><path d="M1015 664h7l1 4-2 1v4h-4v-3h-2z" fill="#eee"/><path d="M1018 665v5" stroke="#345"/><path d="M1032.500 675v-2M1034.500 675v-3M1036.500 675v-5M1038.500 675v-7M1040.500 675v-9" stroke="#fff" stroke-width="1.400"/><path d="M1048 668h2l3-3v9l-3-3h-2z" fill="#fff"/><path d="M1055 666q2 3.500 0 7M1058 665q2 4 0 8" stroke="#dde" fill="none"/><path d="M1066 664h4v10h-4z" fill="#777"/><circle cx="1072" cy="671" r="4" fill="#2aab3b"/><path d="M1070 671l2 2 3-4" stroke="#fff" fill="none"/>
              <g fill="#fff" font-size="8.300"><text x="1088" y="667" textLength="50">17:15 星期四</text><text x="1095" y="678" textLength="37">2016/5/5</text></g><rect x="1144" y="658" width="28" height="23" fill="#195b80" stroke="#102d55"/><path d="M1146 670h25v10h-25z" fill="#8a9499"/><text x="1145" y="668" font-size="8.500" fill="#9bb0bd" textLength="25">儿童节</text><text x="1154" y="680" font-size="8" fill="#444">27</text><path d="M1176.500 656v27" stroke="#6f8eb1"/>
            </svg>
          </div>
          <svg class="bigplay" width="66" height="76" viewBox="1105 605 66 76"><path d="M1126 609l11 9M1152 609l-11 9" stroke="#fff" stroke-width="2.500" stroke-linecap="round"/><rect x="1107" y="615" width="62" height="39" rx="7" fill="#f0f0f3" fill-opacity=".72"/><path d="M1120 654h6l-3 4zM1151 654h6l-3 4z" fill="#eee" fill-opacity=".8"/><path d="M1130 627q0-3 3-2l14 8q2 2 0 4l-14 8q-3 1-3-2z" fill="#77767c"/><path d="M1154 630.500v5l3.500-2.500z" fill="#fff"/><path d="M1154 660q6-1 6 4 7 0 7 6-1 8-8 8t-8-7q0-7 3-11z" fill="#fff" fill-opacity=".95"/></svg>
        </div>
        <div class="controls">
          <svg width="83" height="30" viewBox="218 685 83 30" fill="#99a2aa"><path d="M230 693q0-3 3-2 6 1.500 12 6.500 3 2.500 0 5-6 5-12 6.500-3 1-3-2zM269 693q0-3 2-1.500 5 2 9 6.500 2 2 0 4-4 4.500-9 6-2 1-2-1z"/><rect x="282" y="691" width="4.500" height="17" rx="2"/></svg>
          <div class="track"><div class="played"></div><div class="knob"></div></div>
          <span class="time">11:04 / 11:20</span>
          <svg width="36" height="30" viewBox="994 685 36 30" fill="#99a2aa"><path d="M1000 697q0-2 2-2l5-2v14l-5-2q-2 0-2-2z"/><path d="M1008.500 693q6.500 1 6.500 7t-6.500 7z"/><path d="M1010.500 696.500q3 3.500 0 7" stroke="#fff" fill="none"/></svg>
          <span class="quality">720P</span>
          <svg width="114" height="30" viewBox="1084 685 114 30" fill="none" stroke="#99a2aa" stroke-width="2"><path d="M1088 693h10q2 0 2 2v8q0 2-2 2h-7l-3 3v-3q-2 0-2-2v-8q0-2 2-2z" fill="#99a2aa" stroke="none"/><path d="M1120 695h7q3 0 3 4M1128 697l2 2.500 2-2.500M1116 701q0 4 4 4h6M1114 702.500l2-2.500 2 2.500M1117 693l12 14"/><rect x="1145.500" y="695.500" width="14" height="10" rx="3"/><path d="M1148 692l3 3M1157 692l-3 3M1149 699.500h2M1154 699.500h2"/><g fill="#99a2aa" stroke="none"><circle cx="1183" cy="700" r="1.700"/><path d="M1175 699q1-4 4.500-6l1.500 4-1 2zM1191 699q-1-4-4.500-6l-1.500 4 1 2zM1179 707l3-4h2l3 4q-4 2-8 0z"/></g></svg>
        </div>
        <div class="sendbar">
          <svg width="80" height="38" viewBox="218 715 80 38" fill="none" stroke="#999" stroke-width="2"><path d="M232 727h12q1 0 1 1v9q0 1-1 1h-6l-3 2v-2h-3q-1 0-1-1v-9q0-1 1-1z" fill="#999" stroke="none"/><path d="M235 730.500h7M235 733.500h4" stroke="#fff" stroke-width="1.300"/><rect x="272" y="728" width="12" height="11" rx="1"/><path d="M278 735.500h5l-2.500 3z" fill="#999" stroke="none"/></svg>
          <div class="say">您可以在这里输入弹幕吐槽哦~</div>
          <span class="rule">弹幕礼仪 &gt;</span>
          <button>发送 &gt;</button>
        </div>
      </div>
    </section>
    <aside class="side">
      <div class="sbox feedback">播放问题反馈</div>
      <div class="sbox help">帮助</div>
      <div class="sq up"><svg width="20" height="12" viewBox="0 0 20 12"><path d="M2 10l8-7 8 7" fill="none" stroke="#99a2aa" stroke-width="3"/></svg></div>
      <div class="sq mini">mini<br>OFF</div>
    </aside>
    <div class="scroll"><svg width="15" height="17" viewBox="0 0 15 17"><path d="M4 10h7L7.500 6z" fill="#505050"/></svg><div class="thumb"></div><svg width="15" height="17" viewBox="0 0 15 17"><path d="M4 7h7l-3.500 4z" fill="#505050"/></svg></div>
  </div>
</main>
</div>
</body>
</html>
```
FILE: styles.css
```css
* { box-sizing: border-box; }
body { margin: 0; width: 1366px; height: 768px; overflow: hidden; font-family: "Liberation Sans", "Noto Sans CJK SC", sans-serif; display: flex; flex-direction: column; }
svg { display: block; flex: none; }
svg.defs { position: absolute; }
i, em, b, u, s { font-style: normal; font-weight: normal; text-decoration: none; }

.menubar { height: 24px; flex: none; display: flex; justify-content: space-between; background: linear-gradient(#5c5a50, #403e39); color: #dfdbd2; font-family: "Noto Sans", "Noto Sans CJK SC", sans-serif; line-height: 24px; white-space: nowrap; }
.menu-title { padding-left: 6px; font-size: 14.500px; font-weight: bold; letter-spacing: .27px; }
.indicators { display: flex; width: 290px; font-size: 14.5px; }
.ind-pct { width: 56px; margin-left: -74px; }
.ind-time { width: 57px; padding-left: 11px; letter-spacing: -.2px; }

.desktop { display: flex; flex: 1; min-height: 0; }
.launcher { width: 65px; flex: none; background: #641053; border-right: 1px solid #86447a; padding: 6px 0 6px 6px; display: flex; flex-direction: column; gap: 7px; }
.app { width: 52px; height: 52px; filter: drop-shadow(0 0 1px #3a0830); }
.tile { stroke: #b27ea8; stroke-opacity: .5; }
.trash { margin-top: auto; }
.slot { position: relative; width: 58px; }
.slot::before { content: ""; position: absolute; left: -6px; top: 21px; border: 4.500px solid transparent; border-left: 5px solid #ddd; border-right: 0; }
.focus::after { content: ""; position: absolute; right: 0; top: 21px; border: 4.500px solid transparent; border-right: 5px solid #ddd; border-left: 0; }

.browser { flex: 1; min-width: 0; display: flex; flex-direction: column; background: #f2f1f0; font-family: "Noto Sans", "Noto Sans CJK SC", sans-serif; }
.tabstrip { height: 29px; flex: none; display: flex; padding-left: 19px; background: linear-gradient(#5b594f, #3e3c38); position: relative; }
.tab { position: relative; width: 193px; display: flex; padding: 7px 0 0 7px; color: #72706c; font-size: 14.600px; line-height: 16px; white-space: nowrap; }
.tab-bg { position: absolute; left: -7px; top: 0; width: 210px; height: 29px; fill: #cfcdca; stroke: #9b9994; }
.tab.active { z-index: 1; color: #444; }
.tab.active .tab-bg { fill: #f2f1f0; stroke: #f2f1f0; }
.fav { width: 16px; height: 16px; position: relative; }
.tab span { position: relative; width: 134px; height: 20px; margin: -2px 0 0 6px; line-height: 20px; overflow: hidden; -webkit-mask-image: linear-gradient(90deg, #000 80%, transparent); }
.tab i { position: relative; margin-left: 8px; font: 12px/16px "DejaVu Sans"; color: #555; }
.newtab { margin-left: 3px; }
.user { margin: 2px 8px 4px auto; width: 39px; border: 1px solid #2f2e2a; border-radius: 4px; background: #4e4c46; color: #dfdbd2; font-size: 12.500px; line-height: 21px; text-align: center; }

.toolbar { display: flex; height: 34px; flex: none; }
.omnibox { margin-top: 4px; width: 1173px; height: 28px; border: 1px solid #aaa8a5; border-radius: 2px; background: #fff; display: flex; align-items: center; padding-left: 8px; font-size: 14px; letter-spacing: -.1px; }
.secure { color: #0b8043; margin-left: 6px; width: 51px; height: 17px; line-height: 17px; border-right: 1px solid #bbb; letter-spacing: -.3px; }
.url { margin-left: 10px; color: #999; }
.url b { color: #0b8043; }
.url em { color: #333; }
.omni-icons { margin-left: auto; margin-right: -1px; }
.bookmarks { height: 30px; flex: none; border-bottom: 1px solid #c8c6c3; padding-left: 10px; display: flex; font-size: 14.300px; color: #474747; line-height: 30px; white-space: nowrap; }
.bookmarks div { display: flex; gap: 12px; align-items: center; line-height: 16px; width: 75px; flex: none; }
.bookmarks svg { width: 16px; height: 16px; }
.bookmarks div:nth-child(2) { width: 69px; }
.bookmarks div:nth-child(3) { width: 107px; }
.bookmarks div:nth-child(4) { width: 89px; }
.bookmarks div:nth-child(5) { width: 129px; }
.bookmarks div:nth-child(6) { width: 79px; }
.bookmarks div:nth-child(7) { width: 74px; }
.bookmarks div:nth-child(8) { width: 78px; }
.bookmarks div:nth-child(9) { width: 76px; }
.bookmarks div:nth-child(10) { width: 75px; }
.bookmarks div:nth-child(11) { width: 83px; }
.bookmarks div:nth-child(12) { width: 111px; }
.bookmarks div:nth-child(13) { width: 103px; }

.viewport { flex: 1; min-height: 0; display: flex; background: #f4f8fa; overflow: hidden; font-family: "Liberation Sans", "Noto Sans CJK SC", sans-serif; }
.page { margin-left: 153px; width: 980px; flex: none; }
.parts { list-style: none; margin: -15px 0 12px; padding: 0; display: flex; gap: 20px; height: 31px; font-size: 12px; color: #222; white-space: nowrap; }
.parts li { width: 210px; border: 1px solid #ccd0d7; border-radius: 4px; background: #fff; padding: 0 7px; line-height: 34px; overflow: hidden; }
.parts .on { background: #00a1d6; border-color: #00a1d6; color: #fff; }
.parts .more { width: 60px; text-align: center; }

.player { box-shadow: 0 0 8px #e1e7ea; }
.video { position: relative; height: 540px; background: #000; padding: 2px 14px; }
.frame { height: 536px; background: linear-gradient(#7db0c9, #124c84 30px, #b4c6d4 34px, #8a91a3 80px, #8a91a3 490px, #124c84); overflow: hidden; }
.wps { margin: 0 4px 0 5px; height: 508px; display: flex; flex-direction: column; color: #444; font-family: "Open Sans", "Noto Sans CJK SC", sans-serif; font-size: 8.400px; white-space: nowrap; }
.ribbon, .taskbar { font-family: "Open Sans", "Noto Sans CJK SC", sans-serif; }
.wps-title { height: 20px; display: flex; background: #e2e1e7; }
.wps-brand { width: 77px; height: 19px; background: #3d7fd9; color: #fff; display: flex; align-items: center; padding-left: 4px; font-size: 10px; overflow: hidden; }
.wps-brand span { width: 52px; padding-left: 3px; }
.wps-doc { width: 667px; display: flex; align-items: center; padding-left: 299px; gap: 3px; font-size: 9px; height: 19px; }
.wps-login { width: 56px; height: 19px; background: #fb7850; color: #fff; text-align: center; line-height: 19px; }
.wps-menu { height: 19px; display: flex; background: #e2e1e7; padding-left: 3px; line-height: 21px; }
.wps-menu span { width: 45px; text-align: center; }
.wps-menu .sel { width: 41px; background: #fbfbfd; margin-top: 2px; line-height: 17px; }
.wps-menu span:nth-child(3) { width: 49px; }
.wps-menu span:nth-child(4) { width: 44px; }
.wps-menu span:nth-child(5), .wps-menu span:nth-child(6) { width: 43px; }
.wps-menu span:nth-child(7) { width: 43px; }
.wps-menu span:nth-child(8) { width: 51px; }
.wps-menu span:nth-child(9) { width: 50px; }
.wps-menu .pic { width: 55px; background: #fbfbfd; color: #2a6fc9; border-top: 1px solid #5b93dc; margin-top: 1px; line-height: 17px; }
.ribbon { background: #fbfbfd; }
.doctabs { height: 19px; display: flex; background: #fbfbfd; border-bottom: 1px solid #dedde4; line-height: 18px; }
.dt { display: flex; align-items: center; padding-left: 4px; gap: 3px; }
.dt i { margin-left: auto; width: 10px; font-size: 8px; }
.mine { width: 70px; background: #efeff3; }
.cur { width: 140px; background: #d5e0f3; border-bottom: 2px solid #6d9ddb; height: 19px; }
.plus { margin-left: 5px; font-size: 15px; color: #666; }
.find { margin-left: auto; width: 165px; display: flex; gap: 2px; }
.work { height: 388px; display: flex; background: #c0bfce; }
.outline { width: 204px; padding-left: 7px; }
.ot { display: flex; height: 23px; width: 187px; border-bottom: 1px solid #a4a3b2; line-height: 25px; margin-bottom: 5px; }
.ot .on { color: #2a75d3; width: 45px; height: 23px; border-bottom: 1.500px solid #2a75d3; padding-left: 2px; }
.ot span + span { margin-left: 8px; padding-left: 8px; background: linear-gradient(#888, #888) 0 8px / 1px 10px no-repeat; }
.ot i { margin-left: auto; margin-right: -4px; margin-top: -5px; font-size: 8px; color: #888; }
.outline ol { list-style: none; margin: 0; padding: 0; width: 186px; height: 325px; overflow: hidden; background: linear-gradient(#acabb9, #acabb9) 180px 89px / 5px 213px no-repeat, #efeff4; }
.outline li { height: 15.360px; line-height: 15.360px; width: 179px; border-bottom: 1px solid #e7e7ee; color: #3c3c3c; position: relative; }
.outline li:first-child { margin-top: -7px; }
.outline .l1 { padding-left: 14px; }
.outline .l15 { padding-left: 25px; }
.outline .l2 { padding-left: 30px; }
.outline .l3 { margin-left: 23px; width: 157px; padding-left: 14px; }
.outline .hit { background: #bfd1f4; }
.outline s { position: absolute; margin-left: -9px; font: 6px/15px "DejaVu Sans"; color: #666; }
.osel { display: flex; gap: 7px; padding: 11px 0 0 35px; }
.osel span { width: 55px; height: 16px; line-height: 15px; background: #fff; border: 1px solid #aaa9b5; padding: 0 3px 0 5px; display: flex; justify-content: space-between; }
.osel span + span { padding-left: 11px; }
.sheet { width: 721px; }
.paper { margin: 1px 0 0 12px; background: #fff; font-family: Lato, "Noto Sans CJK SC", sans-serif; font-variant-ligatures: none; fill: #1b1b1b; }
.h { font-size: 20px; fill: #000; }
.p { font-size: 13.600px; }
.d { font-family: "Liberation Serif", "Noto Sans CJK SC", serif; font-size: 9.200px; font-weight: bold; }
.hbar { height: 13px; background: #acabb9; display: flex; align-items: center; }
.hbar b { width: 21px; color: #fff; font-size: 7px; padding-left: 3px; }
.hbar div { width: 611px; height: 10px; background: #d3d2da; color: #888; line-height: 9px; text-align: center; font-size: 7px; }
.status { height: 15px; background: #dfdee3; border-top: 1px solid #aaa9b5; display: flex; line-height: 14px; padding-left: 6px; }
.status span { margin-right: 7.300px; }
.status .spell::before { content: ""; display: inline-block; width: 5px; height: 5px; background: #23a23a; margin-right: 3px; }
.status .spell { margin-right: auto; }
.status .zoomtxt { width: 30px; margin: 0; padding-left: 2px; }
.bigplay { position: absolute; left: 887px; top: 460px; filter: drop-shadow(0 0 2px rgba(0,0,0,.45)); }

.controls { height: 30px; display: flex; align-items: center; background: #fff; border-bottom: 1px solid #e2e2e2; color: #99a2aa; font-size: 12px; }
.track { width: 605px; height: 6px; border-radius: 3px; background: #6fdcee; position: relative; }
.played { width: 584px; height: 6px; border-radius: 3px; background: #00a1d6; }
.knob { position: absolute; left: 577px; top: -4px; width: 14px; height: 14px; border-radius: 50%; background: #fff; box-shadow: 0 0 3px #0096d8; }
.time { margin-left: 8px; width: 80px; font-size: 12px; letter-spacing: .45px; }
.quality { width: 54px; padding-left: 6px; }
.sendbar { height: 38px; display: flex; background: #fff; font-size: 12px; color: #99a2aa; line-height: 38px; }
.say { flex: 1; border-left: 1px solid #e2e2e2; padding-left: 10px; color: #757575; background: linear-gradient(#f5f5f5, #fff); font-size: 12px; }
.rule { width: 67px; background: linear-gradient(#f5f5f5, #fff); }
.sendbar button { width: 66px; height: 30px; margin: 4px 5px 0 0; padding: 0 0 3px 4px; border: 0; border-radius: 4px; background: #00a1d6; color: #fff; font: 12px "Liberation Sans", "Noto Sans CJK SC", sans-serif; }

.side { margin-left: 10px; width: 48px; color: #99a2aa; font-size: 12px; }
.sbox { width: 32px; border: 1px solid #e5e9ef; border-radius: 4px; background: #fff; padding: 0 9px; line-height: 12.300px; }
.feedback { margin-top: -10px; height: 87px; padding-top: 5px; }
.help { margin-top: 5px; height: 40px; padding-top: 7px; }
.sq { border: 1px solid #e5e9ef; border-radius: 4px; text-align: center; }
.up { margin-top: 381px; height: 50px; display: flex; align-items: center; justify-content: center; }
.mini { margin-top: 6px; height: 42px; line-height: 20px; color: #6d757a; }
.scroll { margin-left: auto; width: 15px; background: #f1f1f1; display: flex; flex-direction: column; }
.thumb { height: 84px; background: #c1c1c1; margin: 125px 1px auto; }
```
